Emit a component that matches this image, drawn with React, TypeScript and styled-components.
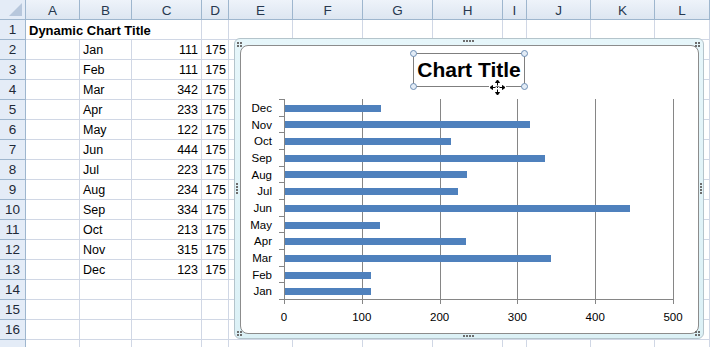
import * as React from "react"
import styled, { createGlobalStyle } from "styled-components"

const GlobalStyle = createGlobalStyle`
  html, body {
    margin: 0;
    padding: 0;
    background: #ffffff;
    overflow: hidden;
  }
  body {
    font-family: "Liberation Sans", Arial, sans-serif;
  }
`

const columns = ["A", "B", "C", "D", "E", "F", "G", "H", "I", "J", "K", "L"]

const data = [
  { month: "Jan", value: 111 },
  { month: "Feb", value: 111 },
  { month: "Mar", value: 342 },
  { month: "Apr", value: 233 },
  { month: "May", value: 122 },
  { month: "Jun", value: 444 },
  { month: "Jul", value: 223 },
  { month: "Aug", value: 234 },
  { month: "Sep", value: 334 },
  { month: "Oct", value: 213 },
  { month: "Nov", value: 315 },
  { month: "Dec", value: 123 },
]

// plot geometry, in px inside the chart area
const X0 = 43
const TOP = 53
const BOTTOM = 253
const SCALE = 389 / 500
const CAT = (BOTTOM - TOP) / 12
const BAR = 7

export default function App() {
  return (
    <>
      <GlobalStyle />
      <Sheet>
        <Corner />
        {columns.map(c => (
          <ColHead key={c}>{c}</ColHead>
        ))}

        <RowHead>1</RowHead>
        <Cell $bold $span={3}>
          Dynamic Chart Title
        </Cell>
        {columns.slice(3).map(c => (
          <Cell key={c} />
        ))}

        {data.map((d, i) => (
          <React.Fragment key={d.month}>
            <RowHead>{i + 2}</RowHead>
            <Cell />
            <Cell>{d.month}</Cell>
            <Cell $align="right">{d.value}</Cell>
            <Cell $align="right" $tight>
              175
            </Cell>
            {columns.slice(4).map(c => (
              <Cell key={c} />
            ))}
          </React.Fragment>
        ))}

        {[14, 15, 16, 17].map(r => (
          <React.Fragment key={r}>
            {/* row 17 is cut by the window, its number is not visible */}
            <RowHead>{r < 17 ? r : ""}</RowHead>
            {columns.map(c => (
              <Cell key={c} />
            ))}
          </React.Fragment>
        ))}

        <ChartFrame>
          <Grip $pos="tl" cols={2} rows={2} />
          <Grip $pos="tr" cols={2} rows={2} />
          <Grip $pos="bl" cols={2} rows={2} />
          <Grip $pos="br" cols={2} rows={2} />
          <Grip $pos="t" cols={4} rows={1} />
          <Grip $pos="b" cols={4} rows={1} />
          <Grip $pos="l" cols={1} rows={4} />
          <Grip $pos="r" cols={1} rows={4} />
          <ChartArea>
            <BarChart />
            <TitleBox>
              Chart Title
              <Handle $pos="tl" />
              <Handle $pos="tr" />
              <Handle $pos="bl" />
              <Handle $pos="br" />
            </TitleBox>
            <MoveCursor />
          </ChartArea>
        </ChartFrame>
      </Sheet>
    </>
  )
}

const BarChart = () => {
  const gridX = [1, 2, 3, 4, 5].map(k => Math.round(X0 + k * 100 * SCALE) + 0.5)
  return (
    <PlotSvg width={457} height={287}>
      {gridX.map(x => (
        <line key={x} x1={x} y1={TOP} x2={x} y2={BOTTOM + 5} stroke="#868686" />
      ))}
      {data.map((d, i) => {
        const y = Math.round(BOTTOM - (i + 1) * CAT + (CAT - BAR) / 2) + 1
        return (
          <rect
            key={d.month}
            x={X0 + 1}
            y={y}
            width={Math.round(d.value * SCALE)}
            height={BAR}
            fill="#4f81bd"
          />
        )
      })}
      <line x1={X0 + 0.5} y1={TOP} x2={X0 + 0.5} y2={BOTTOM + 5} stroke="#868686" />
      <line x1={X0} y1={BOTTOM + 0.5} x2={gridX[4]} y2={BOTTOM + 0.5} stroke="#868686" />
      {Array.from({ length: 13 }).map((_, i) => {
        const y = Math.round(TOP + i * CAT) + 0.5
        return <line key={i} x1={X0 - 5} y1={y} x2={X0} y2={y} stroke="#868686" />
      })}
      {data.map((d, i) => (
        <AxisText
          key={d.month}
          x={31}
          y={BOTTOM - (i + 0.5) * CAT + 4.5}
          textAnchor="end"
        >
          {d.month}
        </AxisText>
      ))}
      {[0, 100, 200, 300, 400, 500].map(v => (
        <AxisText key={v} x={X0 + v * SCALE} y={275} textAnchor="middle">
          {v}
        </AxisText>
      ))}
    </PlotSvg>
  )
}

type GripPos = "tl" | "tr" | "bl" | "br" | "t" | "b" | "l" | "r"

const Grip = ({ $pos, cols, rows }: { $pos: GripPos; cols: number; rows: number }) => (
  <GripSvg $pos={$pos} width={cols * 3 - 1} height={rows * 3 - 1}>
    {Array.from({ length: cols * rows }).map((_, i) => (
      <rect key={i} x={(i % cols) * 3} y={Math.floor(i / cols) * 3} width={2} height={2} fill="#6d6d6d" />
    ))}
  </GripSvg>
)

const MoveCursor = () => (
  <CursorSvg width={17} height={17} viewBox="0 0 17 17">
    <g stroke="#ffffff" strokeWidth={3} fill="#ffffff" strokeLinejoin="round">
      <path d="M8.5 3.5V6.5M8.5 10.5V13.5M3.5 8.5H6.5M10.5 8.5H13.5" />
      <path d="M8.5 0.5L6 3.5H11Z M8.5 16.5L6 13.5H11Z M0.5 8.5L3.5 6V11Z M16.5 8.5L13.5 6V11Z" />
    </g>
    <g stroke="#000000" strokeWidth={1} fill="#000000">
      <path d="M8.5 3V6.5M8.5 10.5V14M3 8.5H6.5M10.5 8.5H14" />
      <path d="M8.5 1L6.5 3.5H10.5Z M8.5 16L6.5 13.5H10.5Z M1 8.5L3.5 6.5V10.5Z M16 8.5L13.5 6.5V10.5Z" />
      <rect x={8} y={8} width={1} height={1} stroke="none" />
    </g>
  </CursorSvg>
)

const Sheet = styled.div`
  position: relative;
  display: grid;
  grid-template-columns: 26px 54px 52px 70px 27px 64px 70px 70px 70px 24px 64px 64px 1fr;
  grid-auto-rows: 20px;
  width: 710px;
  height: 347px;
  overflow: hidden;
  background: #ffffff;
`

const HeadBase = styled.div`
  box-sizing: border-box;
  border-right: 1px solid #9eb6ce;
  border-bottom: 1px solid #9eb6ce;
  background: linear-gradient(#eef3fa, #dde6f1);
  text-align: center;
  font-size: 13.5px;
  line-height: 19px;
  color: #27384f;
`

const ColHead = styled(HeadBase)`
  padding-top: 1px;
`

const RowHead = styled(HeadBase)`
  background: #e4ecf7;
  color: #1f2a38;
  line-height: 20px;
`

const Corner = styled(HeadBase)`
  position: relative;
  background: #e4ecf7;
  &::after {
    content: "";
    position: absolute;
    right: 3px;
    bottom: 3px;
    border-style: solid;
    border-width: 0 0 13px 13px;
    border-color: transparent transparent #b7c7dc transparent;
  }
`

const Cell = styled.div<{ $align?: "left" | "right"; $bold?: boolean; $span?: number; $tight?: boolean }>`
  box-sizing: border-box;
  grid-column: ${p => (p.$span ? `span ${p.$span}` : "auto")};
  border-right: 1px solid #d0d7e5;
  border-bottom: 1px solid #d0d7e5;
  padding: ${p => (p.$tight ? "0 2px 0 1px" : "0 3px")};
  font-size: ${p => (p.$bold ? "13px" : "12.5px")};
  font-weight: ${p => (p.$bold ? 700 : 400)};
  line-height: 21px;
  text-align: ${p => p.$align ?? "left"};
  white-space: nowrap;
  color: #000000;
`

const ChartFrame = styled.div`
  position: absolute;
  left: 234px;
  top: 38px;
  width: 470px;
  height: 301px;
  box-sizing: border-box;
  display: flex;
  padding: 6px 4px 4px 5px;
  border: 1px solid #b4c4cb;
  border-radius: 6px;
  background: linear-gradient(#e6f6fa, #dcf1f6);
`

const ChartArea = styled.div`
  position: relative;
  flex: 1;
  border: 1px solid #8c8c8c;
  border-radius: 8px;
  background: #ffffff;
  overflow: hidden;
`

const PlotSvg = styled.svg`
  display: block;
  shape-rendering: crispEdges;
`

const AxisText = styled.text`
  font-family: "Liberation Sans", Arial, sans-serif;
  font-size: 11.5px;
  fill: #000000;
  shape-rendering: auto;
`

const gripPlace: Record<GripPos, string> = {
  tl: "left: 2px; top: 3px;",
  tr: "right: 3px; top: 3px;",
  bl: "left: 2px; bottom: 2px;",
  br: "right: 3px; bottom: 2px;",
  t: "left: 228px; top: 1px;",
  b: "left: 228px; bottom: 1px;",
  l: "left: 1px; top: 144px;",
  r: "right: 1px; top: 144px;",
}

const GripSvg = styled.svg<{ $pos: GripPos }>`
  position: absolute;
  z-index: 2;
  ${p => gripPlace[p.$pos]}
`

const TitleBox = styled.div`
  position: absolute;
  left: 172px;
  top: 7px;
  width: 112px;
  height: 34px;
  box-sizing: border-box;
  border: 1px solid #7f7f7f;
  font-family: "Liberation Sans", Arial, sans-serif;
  font-size: 21px;
  font-weight: 700;
  line-height: 32px;
  text-align: center;
  color: #000000;
  white-space: nowrap;
`

const handlePlace = {
  tl: "left: -4px; top: -4px;",
  tr: "right: -4px; top: -4px;",
  bl: "left: -4px; bottom: -4px;",
  br: "right: -4px; bottom: -4px;",
}

const Handle = styled.span<{ $pos: keyof typeof handlePlace }>`
  position: absolute;
  width: 5px;
  height: 5px;
  border: 1px solid #6f8fb5;
  border-radius: 50%;
  background: #e3ecf6;
  ${p => handlePlace[p.$pos]}
`

const CursorSvg = styled.svg`
  position: absolute;
  left: 248px;
  top: 33px;
`
